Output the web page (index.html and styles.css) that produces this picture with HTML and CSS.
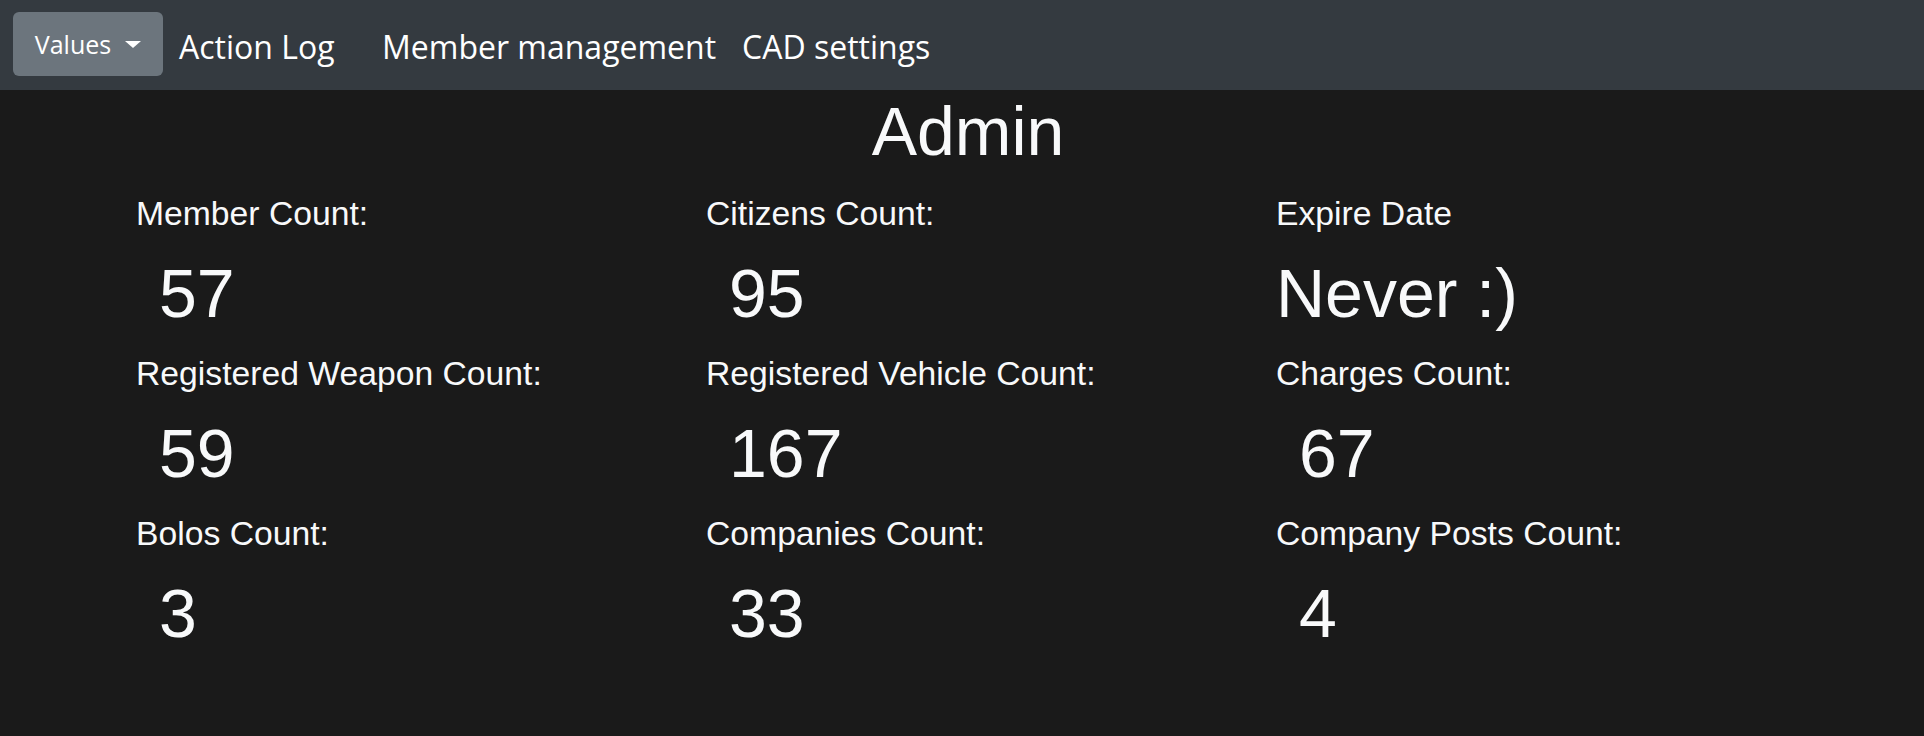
FILE: index.html
```html
<!DOCTYPE html>
<html lang="en">
<head>
<meta charset="utf-8">
<title>Admin</title>
<link rel="stylesheet" href="styles.css">
</head>
<body>
<nav class="navbar">
  <button class="btn-values">Values<span class="caret"></span></button>
  <a class="nav-link link-action">Action Log</a>
  <a class="nav-link link-member">Member management</a>
  <a class="nav-link link-cad">CAD settings</a>
</nav>
<main class="content">
  <h1 class="title">Admin</h1>
  <div class="stats">
    <div class="stat"><h5 class="label">Member Count:</h5><h1 class="value">57</h1></div>
    <div class="stat"><h5 class="label">Citizens Count:</h5><h1 class="value">95</h1></div>
    <div class="stat"><h5 class="label">Expire Date</h5><h1 class="value value-flush">Never :)</h1></div>
    <div class="stat"><h5 class="label">Registered Weapon Count:</h5><h1 class="value">59</h1></div>
    <div class="stat"><h5 class="label">Registered Vehicle Count:</h5><h1 class="value">167</h1></div>
    <div class="stat"><h5 class="label">Charges Count:</h5><h1 class="value">67</h1></div>
    <div class="stat"><h5 class="label">Bolos Count:</h5><h1 class="value">3</h1></div>
    <div class="stat"><h5 class="label">Companies Count:</h5><h1 class="value">33</h1></div>
    <div class="stat"><h5 class="label">Company Posts Count:</h5><h1 class="value">4</h1></div>
  </div>
</main>
</body>
</html>
```

FILE: styles.css
```css
html, body {
  margin: 0;
  padding: 0;
}
body {
  background: #1a1a1a;
  color: #f8f9fa;
  font-family: "Liberation Sans", Arial, sans-serif;
  height: 736px;
  overflow: hidden;
}
.navbar {
  height: 90px;
  background: #343a40;
  display: flex;
  align-items: center;
  padding: 0 0 0 13px;
  box-sizing: border-box;
}
.btn-values {
  width: 150px;
  height: 64px;
  margin-top: -2px;
  background: #6c757d;
  border: none;
  border-radius: 6px;
  color: #fff;
  font-family: "Open Sans", "Noto Sans", sans-serif;
  font-size: 25px;
  display: flex;
  align-items: center;
  justify-content: center;
  padding: 0;
}
.caret {
  display: inline-block;
  margin-left: 14px;
  border-top: 7px solid #fff;
  border-left: 8px solid transparent;
  border-right: 8px solid transparent;
  margin-top: 1px;
}
.nav-link {
  color: #fff;
  font-family: "Open Sans", "Noto Sans", sans-serif;
  font-size: 32px;
  line-height: 1;
  white-space: nowrap;
  padding-top: 3px;
}
.link-action { margin-left: 16px; width: 203px; }
.link-member { width: 360px; }
.link-cad { }
.content {
  padding: 0;
}
.title {
  margin: 1px 0 22px;
  padding-left: 12px;
  text-align: center;
  font-size: 68px;
  font-weight: normal;
  line-height: 80px;
}
.stats {
  display: grid;
  grid-template-columns: repeat(3, 570px);
  margin-left: 136px;
}
.label {
  margin: 0 0 20px;
  font-size: 33.7px;
  font-weight: normal;
  line-height: 40px;
}
.value {
  margin: 0 0 20px;
  padding-left: 23px;
  font-size: 68px;
  font-weight: normal;
  line-height: 80px;
}
.value-flush {
  padding-left: 0;
}
```
